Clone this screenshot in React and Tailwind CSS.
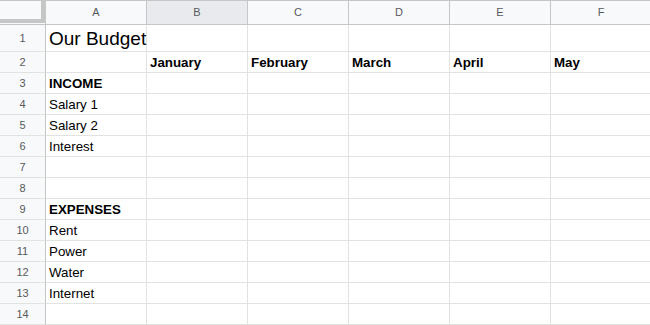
const columns = ["A", "B", "C", "D", "E", "F"];

const rows = [
  { cells: ["Our Budget"], title: true },
  { cells: ["", "January", "February", "March", "April", "May"], bold: true },
  { cells: ["INCOME"], bold: true },
  { cells: ["Salary 1"] },
  { cells: ["Salary 2"] },
  { cells: ["Interest"] },
  { cells: [] },
  { cells: [] },
  { cells: ["EXPENSES"], bold: true },
  { cells: ["Rent"] },
  { cells: ["Power"] },
  { cells: ["Water"] },
  { cells: ["Internet"] },
  { cells: [] },
];

function App() {
  return (
    <div className="w-[650px] h-[325px] overflow-hidden bg-white font-['Liberation_Sans',Arial,sans-serif]">
      <div className="grid grid-cols-[46px_repeat(6,101px)] w-max">
        {/* Corner */}
        <div className="relative h-[25px] bg-[#f8f9fa] border-t border-b border-r border-[#c4c7c5]">
          <div className="absolute left-[41px] top-0 w-[4px] h-[22px] bg-[#c4c7c5]" />
          <div className="absolute left-0 top-[18px] w-[45px] h-[4px] bg-[#c4c7c5]" />
        </div>
        {columns.map((c) => (
          <div
            key={c}
            className={`h-[25px] flex items-center justify-center border-t border-b border-r border-[#c4c7c5] text-[11px] text-[#575a5d] ${
              c === "B" ? "bg-[#e8eaed]" : "bg-[#f8f9fa]"
            }`}
          >
            {c}
          </div>
        ))}

        {rows.map((row, i) => (
          <Row key={i} n={i + 1} row={row} />
        ))}
      </div>
    </div>
  );
}

function Row({ n, row }) {
  const h = row.title ? "h-[27px]" : "h-[21px]";
  return (
    <>
      <div
        className={`${h} flex items-center justify-center bg-[#f8f9fa] border-b border-[#e1e3e1] border-r border-r-[#c4c7c5] text-[11px] text-[#575a5d]`}
      >
        {n}
      </div>
      {columns.map((c, j) => (
        <div
          key={c}
          className={`${h} flex items-end px-[3px] pb-[3px] leading-none border-b border-r border-[#e1e3e1] whitespace-nowrap overflow-visible text-black ${
            row.title ? "text-[19px]" : "text-[13.33px]"
          } ${row.bold ? "font-bold" : ""}`}
        >
          {row.cells[j] || ""}
        </div>
      ))}
    </>
  );
}

export default App;
